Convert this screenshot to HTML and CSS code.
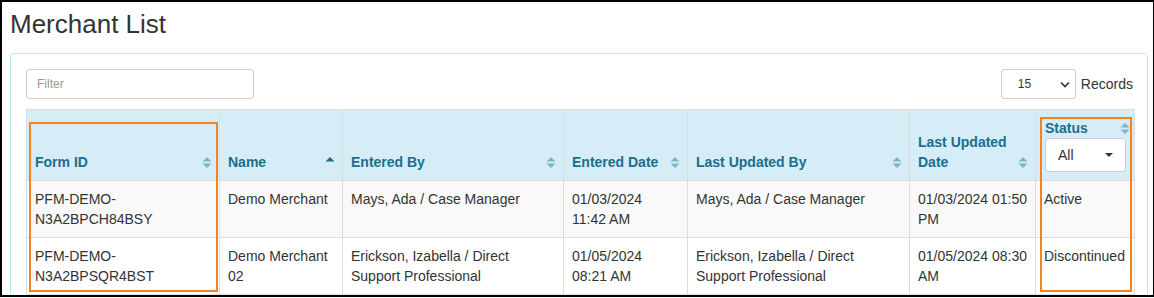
FILE: index.html
```html
<!DOCTYPE html>
<html lang="en">
<head>
    <meta charset="UTF-8">
    <title>Merchant List</title>
    <link rel="stylesheet" href="styles.css">
</head>
<body>
<div class="frame">
    <h1 class="page-title">Merchant List</h1>

    <div class="panel">
        <!-- filter + page size -->
        <div class="toolbar">
            <input class="filter" type="text" placeholder="Filter">
            <div class="records">
                <div class="size-select">
                    <span>15</span>
                    <svg width="10" height="7" viewBox="0 0 10 7"><path d="M1 1.5 L5 5.5 L9 1.5" fill="none" stroke="#333" stroke-width="1.6"/></svg>
                </div>
                <span>Records</span>
            </div>
        </div>

        <table class="grid">
            <colgroup>
                <col style="width:193px">
                <col style="width:123px">
                <col style="width:221px">
                <col style="width:124px">
                <col style="width:222px">
                <col style="width:126px">
                <col style="width:99px">
            </colgroup>
            <thead>
                <tr>
                    <th><div class="th-in"><span>Form ID</span><svg class="sort" width="10" height="13" viewBox="0 0 10 13"><path d="M0.5 5.5 L5 1 L9.5 5.5 Z M0.5 7.5 L5 12 L9.5 7.5 Z"/></svg></div></th>
                    <th><div class="th-in"><span>Name</span><svg class="sort sort-on" width="10" height="13" viewBox="0 0 10 13"><path d="M0.5 5.5 L5 1 L9.5 5.5 Z"/></svg></div></th>
                    <th><div class="th-in"><span>Entered By</span><svg class="sort" width="10" height="13" viewBox="0 0 10 13"><path d="M0.5 5.5 L5 1 L9.5 5.5 Z M0.5 7.5 L5 12 L9.5 7.5 Z"/></svg></div></th>
                    <th><div class="th-in"><span>Entered Date</span><svg class="sort" width="10" height="13" viewBox="0 0 10 13"><path d="M0.5 5.5 L5 1 L9.5 5.5 Z M0.5 7.5 L5 12 L9.5 7.5 Z"/></svg></div></th>
                    <th><div class="th-in"><span>Last Updated By</span><svg class="sort" width="10" height="13" viewBox="0 0 10 13"><path d="M0.5 5.5 L5 1 L9.5 5.5 Z M0.5 7.5 L5 12 L9.5 7.5 Z"/></svg></div></th>
                    <th><div class="th-in"><span>Last Updated<br>Date</span><svg class="sort" width="10" height="13" viewBox="0 0 10 13"><path d="M0.5 5.5 L5 1 L9.5 5.5 Z M0.5 7.5 L5 12 L9.5 7.5 Z"/></svg></div></th>
                    <th class="th-status">
                        <div class="th-in"><span>Status</span><svg class="sort" width="10" height="13" viewBox="0 0 10 13"><path d="M0.5 5.5 L5 1 L9.5 5.5 Z M0.5 7.5 L5 12 L9.5 7.5 Z"/></svg></div>
                        <div class="status-select"><span>All</span><i class="caret"></i></div>
                    </th>
                </tr>
            </thead>
            <tbody>
                <tr>
                    <td>PFM-DEMO-<br>N3A2BPCH84BSY</td>
                    <td>Demo Merchant</td>
                    <td>Mays, Ada / Case Manager</td>
                    <td>01/03/2024<br>11:42 AM</td>
                    <td>Mays, Ada / Case Manager</td>
                    <td>01/03/2024 01:50 PM</td>
                    <td>Active</td>
                </tr>
                <tr>
                    <td>PFM-DEMO-<br>N3A2BPSQR4BST</td>
                    <td>Demo Merchant 02</td>
                    <td>Erickson, Izabella / Direct Support Professional</td>
                    <td>01/05/2024<br>08:21 AM</td>
                    <td>Erickson, Izabella / Direct Support Professional</td>
                    <td>01/05/2024 08:30 AM</td>
                    <td>Discontinued</td>
                </tr>
            </tbody>
        </table>
    </div>

    <!-- highlight annotations -->
    <div class="mark mark-id"></div>
    <div class="mark mark-status"></div>
</div>
</body>
</html>
```

FILE: styles.css
```css
body {
    margin: 0;
    background: #fff;
    font-family: "Liberation Sans", Arial, sans-serif;
    color: #333;
}
.frame {
    position: relative;
    box-sizing: border-box;
    width: 1154px;
    height: 297px;
    border: 2px solid #000;
    border-right-width: 1px;
    overflow: hidden;
    padding: 0 0 0 8px;
}
.page-title {
    margin: 5px 0 0;
    font-size: 26px;
    font-weight: normal;
    line-height: 34px;
    color: #333;
}
.panel {
    margin-top: 12px;
    width: 1138px;
    box-sizing: border-box;
    border: 1px solid #bce8f1;
    border-radius: 4px;
    padding: 15px 13px 15px 15px;
}
.toolbar {
    display: flex;
    justify-content: space-between;
    align-items: center;
    margin-bottom: 10px;
}
.filter {
    box-sizing: border-box;
    width: 228px;
    height: 30px;
    border: 1px solid #ccc;
    border-radius: 3px;
    padding: 0 10px;
    font-family: inherit;
    font-size: 12px;
    color: #555;
}
.filter::placeholder {
    color: #999;
}
.records {
    display: flex;
    align-items: center;
    gap: 5px;
    font-size: 14px;
    margin-right: 1px;
}
.size-select {
    box-sizing: border-box;
    width: 75px;
    height: 30px;
    border: 1px solid #ccc;
    border-radius: 3px;
    display: flex;
    align-items: center;
    justify-content: space-between;
    padding: 0 5px 0 16px;
    font-size: 12px;
    background: #fff;
}
.grid {
    width: 1108px;
    table-layout: fixed;
    border-collapse: collapse;
    border: 1px solid #ddd;
    font-size: 14px;
    line-height: 20px;
}
.grid th,
.grid td {
    border: 1px solid #ddd;
    padding: 8px;
    text-align: left;
}
.grid thead th {
    background: #d6ecf6;
    color: #1a6f8c;
    vertical-align: bottom;
    font-weight: bold;
    border-bottom-color: #ddd;
}
.grid td {
    vertical-align: top;
    color: #333;
}
.grid tbody tr:nth-child(odd) td {
    background: #f9f9f9;
}
.th-in {
    display: flex;
    justify-content: space-between;
    align-items: flex-end;
}
.th-in .sort {
    flex: none;
    margin: 0 -1px 3px 4px;
    fill: #7fb5c7;
}
.th-in .sort-on {
    fill: #1a6f8c;
    margin-bottom: 3px;
}
.th-status {
    vertical-align: top !important;
    padding-right: 8px !important;
}
.th-status .th-in {
    align-items: center;
    padding-left: 1px;
}
.th-status .th-in .sort {
    margin-bottom: 0;
    margin-right: -4px;
}
.status-select {
    box-sizing: border-box;
    height: 34px;
    width: 81px;
    margin-left: 1px;
    border: 1px solid #ccc;
    border-radius: 4px;
    background: #fff;
    display: flex;
    align-items: center;
    justify-content: space-between;
    padding: 0 12px 0 12px;
    font-weight: normal;
    font-size: 14px;
    color: #333;
}
.caret {
    width: 0;
    height: 0;
    border-left: 4px solid transparent;
    border-right: 4px solid transparent;
    border-top: 4px solid #333;
}
.mark {
    position: absolute;
    border: 2px solid #f28222;
    box-sizing: border-box;
}
.mark-id {
    left: 27px;
    top: 120px;
    width: 189px;
    height: 170px;
}
.mark-status {
    left: 1038px;
    top: 115px;
    width: 92px;
    height: 175px;
}
```
